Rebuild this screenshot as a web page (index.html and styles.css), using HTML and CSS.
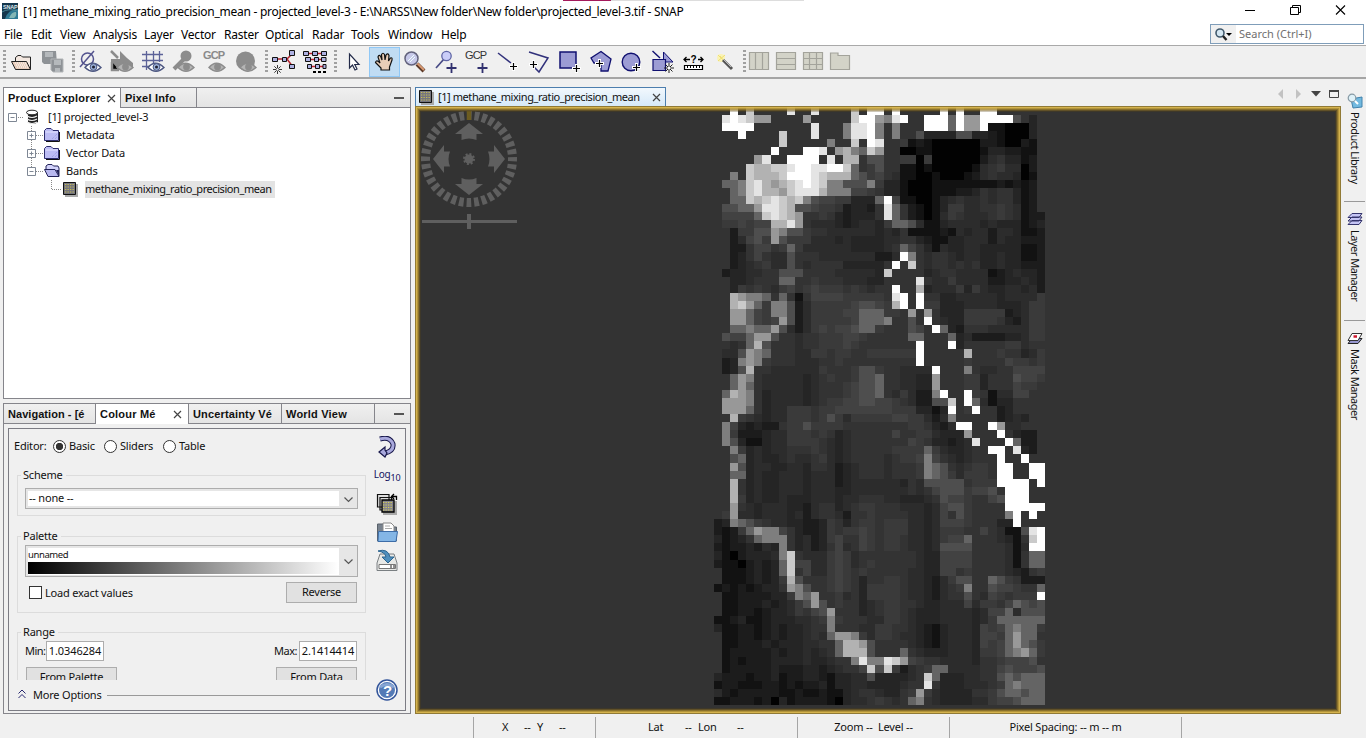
FILE: index.html
```html
<!DOCTYPE html>
<html lang="en">
<head>
<meta charset="utf-8">
<title>SNAP</title>
<link rel="stylesheet" href="styles.css">
</head>
<body>
<svg class="defs" aria-hidden="true">
  <symbol id="eye" viewBox="0 0 18 12"><path d="M1 6.5Q8 -2 17 6.5Q9 14 1 6.5Z" fill="#fff" stroke="currentColor" stroke-width="1.4"/><circle cx="9.5" cy="6" r="3.4" fill="#9db3da" stroke="currentColor"/><circle cx="9.5" cy="6" r="1.5" fill="#223"/></symbol>
  <symbol id="eyeg" viewBox="0 0 18 12"><path d="M1 6.5Q8 -2 17 6.5Q9 14 1 6.5Z" fill="#b4b4b4" stroke="#8c8c8c" stroke-width="1.4"/><circle cx="9.5" cy="6" r="3.4" fill="#8c8c8c"/></symbol>
  <symbol id="plus" viewBox="0 0 9 9"><path d="M4.500 0V9M0 4.500H9" stroke="#fff" stroke-width="3"/><path d="M4.500 1V8M1 4.500H8" stroke="#000" stroke-width="1.200"/></symbol>
  <symbol id="star" viewBox="0 0 10 10"><path d="M5 0V10M0 5H10M1.500 1.500L8.500 8.500M8.500 1.500L1.500 8.500" stroke="#222" stroke-width="1"/><circle cx="5" cy="5" r="1.300" fill="#fff"/></symbol>
  <symbol id="band" viewBox="0 0 15 15"><path d="M2 2H15V15H2Z" fill="#aaa"/><path d="M.5 .5H12.500V12.500H.5Z" fill="#75757e" stroke="#111"/><path d="M2 2.500H12M2 5H12M2 7.500H12M2 10H12" stroke="#c8bd55" stroke-width="1.200" stroke-dasharray="1.300 1.200"/></symbol>
  <symbol id="folder" viewBox="0 0 16 14"><path d="M2 13.500H15.500V4" fill="none" stroke="#111"/><path d="M.5 12.500V2.500L2.500 .5H7L9 2.500H14.500V12.500Z" fill="#bcbcf4" stroke="#2d2d6e"/><path d="M1.500 4H14" stroke="#e4e4ff"/><path d="M8 11L13 6M11 11L13 9" stroke="#9898dc" stroke-dasharray="1 1"/></symbol>
</svg>

<header class="titlebar">
  <svg class="applogo" viewBox="0 0 16 16"><rect width="16" height="16" fill="#15364c"/><path d="M3 16Q6 6 16 6V16Z" fill="#2f7a94"/><path d="M7 15Q10 8 14 9Q15 13 12 15Z" fill="#83b6b5"/><path d="M0 9Q6 5 16 8" stroke="#4b8899" fill="none"/><text x="1" y="6" font-size="5.500" font-weight="bold" fill="#dbe8ec" font-family="Liberation Sans">SNAP</text></svg>
  <span class="caption">[1] methane_mixing_ratio_precision_mean - projected_level-3 - E:\NARSS\New folder\New folder\projected_level-3.tif - SNAP</span>
  <div class="topstrip"><i></i></div>
  <svg class="winbtns" viewBox="0 0 126 20"><path d="M10 10.500H20" stroke="#000"/><path d="M55.500 7.500H63.500V14.500H55.500ZM57.500 7V5.500H65.500V12.500H64" fill="none" stroke="#000"/><path d="M101 5.500L110 14.500M110 5.500L101 14.500" stroke="#000" stroke-width="1.100"/></svg>
</header>

<nav class="menubar">
  <span class="m1">File</span><span class="m2">Edit</span><span class="m3">View</span><span class="m4">Analysis</span><span class="m5">Layer</span><span class="m6">Vector</span><span class="m7">Raster</span><span class="m8">Optical</span><span class="m9">Radar</span><span class="m10">Tools</span><span class="m11">Window</span><span class="m12">Help</span>
  <div class="search"><div class="searchicon"><svg viewBox="0 0 22 16"><circle cx="7" cy="6" r="4" fill="#d5e7f2" stroke="#41596c" stroke-width="1.600"/><path d="M10 9L13.500 13" stroke="#222" stroke-width="2.400"/><path d="M13 6H19L16 9Z"/></svg></div><span>Search (Ctrl+I)</span></div>
</nav>

<div class="toolbar">
  <i class="grip g0"></i>
  <b><svg viewBox="0 0 24 24"><path d="M5.500 19V7.500L8 5.500H11L12.500 7H20.500V19Z" fill="#f4e8e0" stroke="#222"/><path d="M5.500 19.500L1.500 11.500H16.500L20.500 19.500Z" fill="#e8cdbb" stroke="#222"/><path d="M5 13H16M6 15H17M7 17H18" stroke="#fff" stroke-dasharray="1 1"/></svg></b>
  <b><svg viewBox="0 0 24 24"><path d="M1 1H15L16 14H3L1 12Z" fill="#8e9296"/><path d="M4 2H12V7H4Z" fill="#b5b9bc"/><path d="M10 9H22V22H12L10 20Z" fill="#8e9296" stroke="#b3b6b8"/><path d="M13 10H20V15H13ZM14 18H19V22H14Z" fill="#b5b9bc"/></svg></b>
  <i class="grip"></i>
  <b class="blue"><svg viewBox="0 0 24 24"><circle cx="8.500" cy="9" r="6" fill="none" stroke="#53538e" stroke-width="1.500"/><path d="M1 17L15 1" stroke="#53538e" stroke-width="1.500"/><use href="#eye" x="5" y="11" width="18" height="12"/></svg></b>
  <b><svg viewBox="0 0 24 24"><path d="M1 9H10V1L17 8L23 13V17H1Z" fill="#8c8c8c"/><path d="M1 1L8 8M2 12V20H9" stroke="#8c8c8c" stroke-width="2.500"/><use href="#eyeg" x="6" y="11" width="18" height="12"/></svg></b>
  <b class="blue"><svg viewBox="0 0 24 24"><path d="M5.500 1V20M12.500 1V20M18.500 1V12M1 4.500H22M1 10.500H22M1 16.500H9" stroke="#5c6298" stroke-width="1.300"/><use href="#eye" x="6" y="11" width="18" height="12"/></svg></b>
  <b><svg viewBox="0 0 24 24"><circle cx="14" cy="6" r="5.500" fill="#8c8c8c"/><path d="M12 9L2 19" stroke="#8c8c8c" stroke-width="4"/><use href="#eyeg" x="5" y="11" width="18" height="12"/></svg></b>
  <b><svg viewBox="0 0 24 24"><text x="0" y="9" class="gcp grey" textLength="22">GCP</text><use href="#eyeg" x="5" y="11" width="18" height="12"/></svg></b>
  <b><svg viewBox="0 0 24 24"><circle cx="11.500" cy="11" r="9.500" fill="#8c8c8c"/><use href="#eyeg" x="5" y="11" width="18" height="12"/></svg></b>
  <i class="grip"></i>
  <b><svg viewBox="0 0 24 24"><path d="M4 9H15L21 3M15 9L21 17" stroke="#b42430" stroke-width="1.500" fill="none"/><path d="M.5 7.500H5.500V11.500H.5ZM10.500 7.500H14.500V11.500H10.500ZM17.500 .5H22.500V5.500H17.500ZM17.500 14.500H22.500V18.500H17.500Z" fill="#aeb1e2" stroke="#111"/><use href="#star" x="1" y="15" width="9" height="9"/></svg></b>
  <b><svg viewBox="0 0 24 24"><path d="M1 3.500H23M4 9.500H23M4 16.500H22" stroke="#c02030" stroke-width="1.600"/><path d="M.5 1.500H5.500V5.500H.5ZM9.500 1.500H14.500V5.500H9.500ZM18.500 1.500H23.500V5.500H18.500ZM2.500 7.500H7.500V11.500H2.500ZM11.500 7.500H15.500V11.500H11.500ZM18.500 7.500H23V11.500H18.500ZM4.500 14.500H8.500V18.500H4.500ZM12.500 14.500H16.500V18.500H12.500ZM20 14.500H23V18.500H20Z" fill="#aeb1e2" stroke="#111"/><path d="M10 22H13M15 22H18M20 22H23" stroke="#000" stroke-width="2"/></svg></b>
  <i class="grip"></i>
  <b><svg viewBox="0 0 24 24"><path d="M8.500 4V18L11.500 15L14 20L16 19L13.800 14.500H18Z" fill="#fff" stroke="#222a48" stroke-width="1.200"/></svg></b>
  <b class="on"><svg viewBox="0 0 24 24"><path d="M9 20V18L3.500 12.500Q4 10 6.500 11.500L8 13L6 7Q7 4 8.700 6.500L10 10L9.500 4.500Q11 2 12.500 4.500L13 10L14 5Q16 2.500 17 5.500L16.500 11L18.500 8Q20.500 7 20 10L17.500 17V20Z" fill="#e9cdb7" stroke="#111" stroke-width="1.200"/></svg></b>
  <b><svg viewBox="0 0 24 24"><path d="M14 14L21 21" stroke="#5b3827" stroke-width="4"/><path d="M14.500 13.500L21 20" stroke="#d99a72" stroke-width="2"/><circle cx="8.500" cy="8.500" r="6.500" fill="#c7c9e9" stroke="#62627c" stroke-width="1.500"/><path d="M5 11L11 5M7 12L12 7" stroke="#eff"/></svg></b>
  <b><svg viewBox="0 0 24 24"><path d="M10 9L2 18" stroke="#474a85" stroke-width="1.700"/><circle cx="12.500" cy="6" r="4.700" fill="#cacdf8" stroke="#5e64a4" stroke-width="1.300"/><path d="M17.500 13V23M12.500 18H22.500" stroke="#31316f" stroke-width="1.800"/></svg></b>
  <b><svg viewBox="0 0 24 24"><text x="0" y="9" class="gcp" textLength="22">GCP</text><path d="M17.500 13V23M12.500 18H22.500" stroke="#31316f" stroke-width="1.800"/></svg></b>
  <b><svg viewBox="0 0 24 24"><path d="M2 3L15 13" stroke="#31317b" stroke-width="1.500"/><use href="#plus" x="13" y="12" width="9" height="9"/></svg></b>
  <b><svg viewBox="0 0 24 24"><path d="M2 2L21 8L12 22L7 17" stroke="#31317b" stroke-width="1.500" fill="none"/><use href="#plus" x="2" y="10" width="9" height="9"/></svg></b>
  <b><svg viewBox="0 0 24 24"><path d="M2 2H18V18H2Z" fill="#9c9cd4" stroke="#101070" stroke-width="1.500"/><use href="#plus" x="14" y="14" width="9" height="9"/></svg></b>
  <b><svg viewBox="0 0 24 24"><path d="M12 1.500L22 9L19 21H12V13H5L2 8Z" fill="#9c9cd4" stroke="#101070" stroke-width="1.300"/><use href="#plus" x="6" y="9" width="9" height="9"/></svg></b>
  <b><svg viewBox="0 0 24 24"><circle cx="11" cy="12" r="8.800" fill="#9c9cd4" stroke="#101070" stroke-width="1.400"/><use href="#plus" x="12" y="13" width="9" height="9"/></svg></b>
  <b><svg viewBox="0 0 24 24"><path d="M12.500 10V2L22 12H14" fill="#9c9cd4" stroke="#101070"/><path d="M2 9.500H14.500V20.500H2Z" fill="#9c9cd4" stroke="#101070" stroke-width="1.200"/><path d="M1.500 1L9 8" stroke="#101070" stroke-width="1.400"/><use href="#star" x="13" y="13" width="10" height="10"/></svg></b>
  <b><svg viewBox="0 0 24 24"><path d="M2 9.500H8M16 9.500H21M4.500 7L2 9.500L4.500 12M18.500 7L21 9.500L18.500 12" stroke="#000" stroke-width="1.300" fill="none"/><text x="8.500" y="12.500" font-size="10" font-weight="bold" font-family="Liberation Sans">?</text><path d="M2.500 15.500H20.500V19.500H2.500Z" fill="#fff" stroke="#000" stroke-width="1.200"/><path d="M5.500 15V18M8.500 15V18M11.500 15V18M14.500 15V18M17.500 15V18" stroke="#000"/></svg></b>
  <b><svg viewBox="0 0 24 24"><circle cx="8" cy="8" r="4" fill="#faf3b5"/><path d="M7 6L11 11M12 5L5 11M5 5L10 10" stroke="#efdf71"/><path d="M10 10L19 19" stroke="#555" stroke-width="3"/><path d="M10 9L18 17" stroke="#bbb"/></svg></b>
  <i class="grip g4"></i>
  <b class="n"><svg viewBox="0 0 24 24"><path d="M2.500 2.500H21.500V19.500H2.500ZM8.500 3V19M15.500 3V19"/></svg></b>
  <b class="n"><svg viewBox="0 0 24 24"><path d="M2.500 2.500H21.500V19.500H2.500ZM3 8.500H21M3 14.500H21"/></svg></b>
  <b class="n"><svg viewBox="0 0 24 24"><path d="M2.500 2.500H21.500V19.500H2.500ZM3 8.500H21M3 14.500H21M8.500 3V19M15.500 3V19"/></svg></b>
  <b class="n"><svg viewBox="0 0 24 24"><path d="M2.500 19.500V3H10V5.500H21.500V19.500Z"/></svg></b>
</div>

<main>
  <aside class="left">
    <section class="panel explorer">
      <div class="tabs">
        <div class="tab act t1"><span>Product Explorer</span><svg viewBox="0 0 9 9"><path d="M1 1L8 8M8 1L1 8"/></svg></div>
        <div class="tab t2"><span>Pixel Info</span></div>
        <div class="tabfill"><i></i></div>
      </div>
      <div class="tree">
        <div class="row r0"><svg class="lines" viewBox="0 0 20 18"><path d="M14 9.500H20" class="dots"/><path d="M4.500 5.500H12.500V13.500H4.500ZM6.500 9.500H10.500" class="box"/></svg><svg class="ico" viewBox="0 0 16 16"><path d="M3 3V13Q8 17 13 13V3" fill="#222"/><ellipse cx="7" cy="3.500" rx="5.500" ry="2.300" fill="#fff" stroke="#222"/><path d="M2 7Q7 10 12 7M2 10Q7 13 12 10M2 13Q7 16 12 13" stroke="#eee" stroke-width="1.200" fill="none"/></svg><span>[1] projected_level-3</span></div>
        <div class="row r1"><svg class="lines" viewBox="0 0 40 18"><path d="M27.500 0V18M32 9.500H39" class="dots"/><path d="M23.500 5.500H31.500V13.500H23.500ZM25.500 9.500H29.500M27.500 7.500V11.500" class="box"/></svg><svg class="ico"><use href="#folder"/></svg><span>Metadata</span></div>
        <div class="row r1"><svg class="lines" viewBox="0 0 40 18"><path d="M27.500 0V18M32 9.500H39" class="dots"/><path d="M23.500 5.500H31.500V13.500H23.500ZM25.500 9.500H29.500M27.500 7.500V11.500" class="box"/></svg><svg class="ico"><use href="#folder"/></svg><span>Vector Data</span></div>
        <div class="row r1"><svg class="lines" viewBox="0 0 40 18"><path d="M27.500 0V5M32 9.500H39" class="dots"/><path d="M23.500 5.500H31.500V13.500H23.500ZM25.500 9.500H29.500" class="box"/></svg><svg class="ico" viewBox="0 0 16 14"><path d="M2 6V2L4 .5H8L9.500 2H14L15 4V12H4Z" fill="#d3d3fb" stroke="#222258"/><path d="M4 12.500L.5 5.500H11L15 12.500Z" fill="#b8b8ef" stroke="#222258"/><path d="M12 6H15V12Z" fill="#222258"/></svg><span>Bands</span></div>
        <div class="row r2"><svg class="lines" viewBox="0 0 60 18"><path d="M47.500 0V9.500H58" class="dots"/></svg><svg class="ico"><use href="#band"/></svg><span class="sel">methane_mixing_ratio_precision_mean</span></div>
      </div>
    </section>

    <section class="panel colour">
      <div class="tabs">
        <div class="tab u1"><span>Navigation - [é</span></div>
        <div class="tab act u2"><span>Colour Mé</span><svg viewBox="0 0 9 9"><path d="M1 1L8 8M8 1L1 8"/></svg></div>
        <div class="tab u3"><span>Uncertainty Vé</span></div>
        <div class="tab u4"><span>World View</span></div>
        <div class="tabfill"><i></i></div>
      </div>
      <div class="inner">
        <div class="formcol">
          <div class="scroll">
            <div class="editor"><span class="e1">Editor:</span><i class="radio on"></i><span class="e2">Basic</span><i class="radio"></i><span class="e3">Sliders</span><i class="radio"></i><span>Table</span></div>
            <fieldset class="scheme"><legend>Scheme</legend>
              <div class="combo"><div class="val"><span>-- none --</span></div><svg viewBox="0 0 9 6"><path d="M.5 .5L4.500 4.500L8.500 .5"/></svg></div>
            </fieldset>
            <fieldset class="palette"><legend>Palette</legend>
              <div class="combo tall"><div class="val"><span>unnamed</span><i class="ramp"></i></div><svg viewBox="0 0 9 6"><path d="M.5 .5L4.500 4.500L8.500 .5"/></svg></div>
              <div class="line"><i class="check"></i><span>Load exact values</span><div class="btn">Reverse</div></div>
            </fieldset>
            <fieldset class="range"><legend>Range</legend>
              <div class="minmax"><span>Min:</span><div class="num">1.0346284</div><span class="max">Max:</span><div class="num">2.1414414</div></div>
              <div class="fromrow"><div class="btn f1">From Palette</div><div class="btn f2">From Data</div></div>
            </fieldset>
          </div>
          <div class="more"><svg viewBox="0 0 8 10"><path d="M.5 4.500L4 1L7.500 4.500M.5 9L4 5.500L7.500 9"/></svg><span>More Options</span><i></i></div>
        </div>
        <div class="iconcol">
          <svg viewBox="0 0 22 22"><path d="M4 3Q14 0 17 8Q18 15 9 17" fill="none" stroke="#17174a" stroke-width="5"/><path d="M4 3Q14 0 17 8Q18 15 9 17" fill="none" stroke="#a9a9dd" stroke-width="3"/><path d="M3 16L9 11V14L11 17L9 21Z" fill="#a9a9dd" stroke="#17174a" stroke-width="1.200"/></svg>
          <div class="log">Log<sub>10</sub></div>
          <svg viewBox="0 0 22 22"><path d="M1.500 1.500H13V14H1.500ZM4 4.500H15.500V17H4Z" fill="#ddd" stroke="#111" stroke-width="1.200"/><path d="M7 8H21V22H7Z" fill="#aaa"/><path d="M6 7H18V19H6Z" fill="#85858e" stroke="#000" stroke-width="1.300"/><path d="M7 9.500H17M7 12H17M7 14.500H17M7 17H17" stroke="#d8ce55" stroke-width="1.200" stroke-dasharray="1.300 1.200"/><path d="M16 3.500H20.500V7M18 1L15.500 3.500L18 6" fill="none" stroke="#000" stroke-width="1.300"/></svg>
          <svg viewBox="0 0 22 22"><path d="M1.500 20V3H8L9 6H20.500V20Z" fill="#78828e" stroke="#59616a"/><path d="M7 12V2H15L18 5V12" fill="#fff" stroke="#888"/><path d="M9 5H14M9 7.500H16" stroke="#aaa"/><path d="M2.500 10.500H21.500L20 20.500H2Z" fill="#84b6e6" stroke="#3d6da8"/></svg>
          <svg viewBox="0 0 22 22"><path d="M1 14L4 5H18L21 14V21.500H1Z" fill="#e8e9e7" stroke="#7a7f82"/><path d="M3 15.500H19.500V19.500H3Z" fill="#fff" stroke="#777"/><path d="M15 16V19M18 16V19" stroke="#222"/><path d="M2 2Q12 -1 14 8H18L12 14L6 8H10Q9 3 2 2Z" fill="#4f8fbd" stroke="#2b6490"/></svg>
          <svg class="help" viewBox="0 0 22 22"><circle cx="11" cy="11" r="10" fill="#fff" stroke="#32549a" stroke-width="1.500"/><circle cx="11" cy="11" r="8" fill="#537ab6"/><path d="M4 8Q11 3 18 8" stroke="#86a5d3" fill="none" stroke-width="3"/><text x="7" y="16.500" font-size="15" font-weight="bold" fill="#fff" font-family="Liberation Sans">?</text></svg>
        </div>
      </div>
    </section>
  </aside>

  <section class="view">
    <div class="viewtabs">
      <div class="vtab"><svg class="ico"><use href="#band"/></svg><span>[1] methane_mixing_ratio_precision_mean</span><svg class="x" viewBox="0 0 9 9"><path d="M1 1L8 8M8 1L1 8"/></svg></div>
      <svg class="vctl" viewBox="0 0 64 12"><path d="M6 1V11L1 6Z" fill="#c2c2c2"/><path d="M19 1V11L24 6Z" fill="#c2c2c2"/><path d="M34 3H44L39 8.500Z" fill="#444"/><path d="M52.500 3H61.500V9.500H52.500Z" fill="none" stroke="#444"/><path d="M52 3H62" stroke="#444" stroke-width="2"/></svg>
    </div>
    <div class="scene">
      <canvas id="raster" width="41" height="74"></canvas>
      <svg class="compass" viewBox="0 0 100 120">
        <circle cx="50" cy="50" r="43.500" fill="none" stroke="#5f5f5f" stroke-width="9" stroke-dasharray="4.700 2.892" stroke-dashoffset="2.350"/>
        <path d="M50 2V11" stroke="#6c5c20" stroke-width="4.500"/>
        <g fill="#5f5f5f"><path id="ar" d="M50 14L64 25H57.500V31Q50 28 42.500 31V25H36Z"/><use href="#ar" transform="rotate(90 50 50)"/><use href="#ar" transform="rotate(180 50 50)"/><use href="#ar" transform="rotate(270 50 50)"/><circle cx="50" cy="50" r="4.500"/><path d="M3 111H98V114H3Z"/><path d="M48 105H52V120H48Z"/></g>
        <circle cx="50" cy="50" r="5" fill="none" stroke="#5f5f5f" stroke-width="2" stroke-dasharray="2 1.900"/>
      </svg>
      <div class="frame"></div>
    </div>
  </section>

  <aside class="dock">
    <div class="d1"><svg viewBox="0 0 16 16"><path d="M4 6L15 4V14L6 15Z" fill="#72b9df" stroke="#4182ac"/><circle cx="5" cy="5" r="3.800" fill="#dff1f8" stroke="#8699a4" stroke-width="1.200"/><path d="M8 8L11 11" stroke="#fff" stroke-width="2"/></svg><span>Product Library</span></div>
    <div class="d2"><svg viewBox="0 0 16 16"><path d="M1 13.500L5 9.500H15L12 13.500ZM1 10L5 6H15L12 10ZM1 6.500L5 2.500H15L12 6.500Z" fill="#c4c4f4" stroke="#34346c"/></svg><span>Layer Manager</span></div>
    <div class="d3"><svg viewBox="0 0 16 16"><path d="M1 13.500L5 8.500H15L11 13.500Z" fill="#9696cf" stroke="#222"/><path d="M1 10.500L5 3.500H15L11 10.500Z" fill="#fff" stroke="#333"/><path d="M6.500 6.500H10" stroke="#d01830" stroke-width="2.500"/></svg><span>Mask Manager</span></div>
  </aside>
</main>

<footer>
  <div class="s0"></div>
  <div class="s1"><span>X</span><span class="a">--</span><span class="b">Y</span><span class="c">--</span></div>
  <div class="s2"><span>Lat</span><span class="a">--</span><span class="b">Lon</span><span class="c">--</span></div>
  <div class="s3">Zoom --&nbsp; Level --</div>
  <div class="s4">Pixel Spacing: -- m -- m</div>
  <div class="s5"></div>
</footer>
<script src="raster.js"></script>
</body>
</html>
```
FILE: styles.css
```css
*{box-sizing:border-box}
body{margin:0;width:1366px;height:738px;overflow:hidden;background:#f0f0f0;color:#111;font:11px/14px "Noto Sans","Open Sans",sans-serif;display:flex;flex-direction:column;white-space:nowrap;letter-spacing:-.2px}
svg{display:block;flex:none}
.defs{position:absolute;width:0;height:0}
i{display:block;flex:none}
.titlebar{height:23px;background:#fff;display:flex;align-items:flex-start;position:relative}
.applogo{width:16px;height:16px;margin:3px 5px 0 2px}
.caption{font-size:12px;line-height:24px;letter-spacing:-.265px;flex:1;color:#000}
.topstrip{position:absolute;left:563px;top:0;width:241px;height:1px;background:#ddd}
.topstrip i{width:48px;height:1px;background:#a3195b}
.winbtns{width:126px;height:20px;margin-right:5px}
.menubar{height:23px;background:#fff;display:flex;align-items:center;font-size:12px;letter-spacing:-.2px;border-bottom:1px solid #a9a9a9;padding:1px 0 0 4px;color:#000}
.menubar>span{padding-top:1px}
.m1{width:27px}.m2{width:29px}.m3{width:33px}.m4{width:51px}.m5{width:37px}.m6{width:43px}.m7{width:41px}.m8{width:47px}.m9{width:39px}.m10{width:37px}.m11{width:53px}
.search{margin-left:auto;width:154px;height:20px;margin-right:2px;border:1px solid #7f9db9;display:flex;align-items:center;color:#707070;font-size:11px;letter-spacing:0}
.searchicon{width:25px;height:18px;background:#f0f0f0;padding:2px 0 0 2px;margin-right:3px}
.searchicon svg{width:22px;height:16px}
.toolbar{height:34px;border-bottom:2px solid #a5a5a5;display:flex;align-items:center;padding:1px 0 0 2.5px}
.grip{width:3px;height:24px;margin:0 1px 0 3px;background:repeating-linear-gradient(#a0a0a0 0 2px,transparent 2px 4px)}
.grip.g0{margin:0 1px 0 0}
.grip.g4{margin:0 0 0 2px}
.toolbar b{width:31px;height:30px;display:flex;align-items:center;justify-content:center;color:#4c5680}
.toolbar b svg{width:24px;height:24px}
.toolbar b.on{background:#c0dcf3;border:1px solid #90c8f6}
.toolbar b.n{width:27px}
.n path{fill:#d3d3c8;stroke:#a3a39b;stroke-width:1.2}
.gcp{font:11px "Liberation Sans",sans-serif;fill:#333}
.gcp.grey{fill:#8a8a8a;font-weight:bold}
main{height:635px;display:flex}
.left{width:415px;padding:8px 4px 0 3px;display:flex;flex-direction:column;gap:4px}
.panel{border:1px solid #85858b;width:408px}
.explorer{height:312px;background:#fff}
.colour{height:311px;display:flex;flex-direction:column}
.tabs{display:flex;height:20px;border-bottom:1px solid #85858b;background:linear-gradient(#f0f0f0,#e4e4e4)}
.tab{border-right:1px solid #85858b;padding:0 4px;font:bold 11px/20px "Liberation Sans",Arial,sans-serif;display:flex;align-items:center;justify-content:space-between;letter-spacing:.2px}
.tab.act{background:#fff;height:20px}
.tab svg,.x{width:9px;height:9px;fill:none;stroke:#444;stroke-width:1.2}
.t1{width:117px}.t2{width:76px}
.tabfill{flex:1;display:flex;align-items:center;justify-content:flex-end;padding-right:6px}
.tabfill i{width:10px;height:2px;background:#555}
.u1{width:92px;letter-spacing:.05px}.u2{width:93px}.u3{width:93px;letter-spacing:.15px}.u4{width:93px}
.u2 svg{margin-right:2px}
.row{height:18px;display:flex;align-items:center}
.lines{width:40px;height:18px}
.r0 .lines{width:20px}
.r2 .lines{width:60px}
.lines path{fill:none}
.lines .dots{stroke:#888;stroke-dasharray:1 1}
.lines .box{stroke:#7e8794;fill:#fff}
.row .ico{width:16px;height:14px}
.row.r2 .ico{width:15px;height:15px;margin-left:-1px}
.r0 .ico{height:16px;margin-left:1px}
.row span{margin-left:6px;letter-spacing:-.1px}
.row.r0 span{margin-left:7px;letter-spacing:-.15px}
.row .sel{background:#e3e3e3;line-height:16px;height:17px;margin-left:7px;padding:0 3px 0 0;letter-spacing:-.43px}
.inner{margin:4px 4px 4px 4px;flex:1;border:1px solid #7c7c84;display:flex}
.formcol{width:362px;padding-left:5px}
.scroll{height:251px;overflow:hidden;padding-left:3px}
.editor{height:39px;display:flex;align-items:center;margin-left:-3px;padding-bottom:5px}
.e1{width:39px}.e2{width:35px}.e3{width:43px}
.radio{width:13px;height:13px;border:1px solid #333;border-radius:50%;background:#fff;margin-right:3px}
.radio.on{background:radial-gradient(circle,#333 0 3.4px,#fff 4px)}
fieldset{margin:0;padding:0 7px;border:1px solid #dcdcdc;width:349px;min-width:0}
legend{padding:0 3px 0 2px;margin-left:-4px;height:14px;line-height:14px}
.scheme{height:48px}
.scheme .combo{margin-top:6px}
.palette{height:84px;margin-top:13px}
.range{height:90px;margin-top:12px}
.combo{width:333px;height:21px;border:1px solid #adadad;background:#e6e6e6;display:flex;align-items:center;padding-left:2px}
.val{width:311px;height:15px;background:#fff;line-height:14px;padding-left:1px}
.val span{display:block}
.combo svg{width:9px;height:6px;margin:2px 0 0 5px;fill:none;stroke:#555;stroke-width:1.2}
.combo.tall{height:32px;margin-top:2px}
.tall .val{height:27px;font-size:9.5px;padding:0;line-height:14px;letter-spacing:-.4px}
.ramp{height:12px;background:linear-gradient(90deg,#000,#fff)}
.line{display:flex;align-items:center;margin-top:5px;padding-left:4px}
.check{width:13px;height:13px;border:1px solid #333;background:#fff;margin-right:3px}
.btn{height:21px;border:1px solid #adadad;background:#e1e1e1;text-align:center;line-height:18px}
.line .btn{width:71px;margin-left:auto;margin-right:1px}
.minmax{display:flex;align-items:center;height:20px;margin-top:2px}
.minmax span{width:21px;letter-spacing:-.5px}
.minmax .max{margin-left:auto;width:25px}
.num{width:58px;height:20px;border:1px solid #adadad;background:#fff;line-height:18px;text-align:center;letter-spacing:-.1px}
.minmax .num:last-child{margin-right:1px}
.fromrow{display:flex;justify-content:space-between;margin-top:6px;padding:0 1px 0 1px}
.f1{width:91px}.f2{width:81px}
.more{display:flex;align-items:center;height:30px;padding-left:4px}
.more svg{width:8px;height:10px;fill:none;stroke:#27276e;margin:-3px 7px 0 0}
.more i{height:1px;background:#999;flex:1;margin:0 1px 0 5px}
.iconcol{width:32px;display:flex;flex-direction:column;align-items:center;padding-top:7px}
.iconcol svg{width:22px;height:22px;margin-bottom:6px}
.log{height:22px;margin-bottom:7px;color:#14145f;line-height:20px;font-size:10px}
.log sub{font-size:9px;line-height:0}
.iconcol .help{margin:102px 0 0}
.view{width:926px;display:flex;flex-direction:column;padding-top:8px}
.viewtabs{height:20px;display:flex;justify-content:space-between}
.vtab{width:251px;border:1px solid #4c7eae;border-bottom:0;background:linear-gradient(#f2f8fd,#d4e8f8);display:flex;align-items:center;padding-left:3px}
.vtab .ico{width:15px;height:15px}
.vtab span{margin:-1px 0 0 4px;flex:1;letter-spacing:-.42px}
.vtab .x{margin-right:4px}
.vctl{width:64px;height:12px;margin:1px 0 0}
.scene{height:607px;background:#333;position:relative;padding-left:299px}
#raster{display:block;width:331px;height:598px;image-rendering:pixelated}
.compass{position:absolute;left:4px;top:2px;width:100px;height:120px}
.frame{position:absolute;inset:-1px 0 0 0;box-shadow:inset 0 0 0 1px #917a35,inset 0 0 0 2px rgba(222,187,84,.8),inset 0 0 0 3px rgba(203,170,70,.6),inset 0 0 0 4px rgba(180,145,50,.5),inset 0 0 0 5px rgba(150,120,40,.4),inset 0 0 0 6px rgba(90,70,20,.3)}
.dock{width:25px;padding:14px 1px 0 3px}
.dock div{display:flex;flex-direction:column;align-items:center;height:109px;border-bottom:1px solid #999}
.dock .d2,.dock .d3{height:119px;padding-top:9px}
.dock .d3{border:0}
.dock svg{width:16px;height:16px}
.dock span{writing-mode:vertical-rl;margin-top:3px;line-height:14px;letter-spacing:-.5px}
footer{height:24px;display:flex;align-items:center;letter-spacing:-.2px;padding-top:3px}
footer>div{height:21px;line-height:19px;border-right:1px solid #a5a5a5;display:flex;justify-content:center}
footer .s0{width:474px}.s1{width:122px}.s2{width:202px}.s3{width:152px}.s4{width:232px}
footer .s5{border:0}
footer .s1,footer .s2{justify-content:flex-start;padding-left:28px}
.s1 span{width:22px}.s1 .a{width:13px}
footer .s2{padding-left:52px}
.s2 span{width:37px}.s2 .a{width:13px}.s2 .b{width:39px}
```
FILE: raster.js
```js
// Grey level of each raster cell, one hex digit per cell, 41 columns per row.
const LEVELS = [2, 18, 28, 37, 44, 51, 58, 66, 78, 100, 126, 152, 178, 202, 228, 255];
const ROWS = `
55f5d5555e 55e5555d5f f5f55555f5 f55ff55555 5
5efedbb555 5b55555dff baef55fff9 fbbffff853 5
5ffff55555 55e555aeef a5a555fff9 fbbf110003 5
555f5555d5 55e555aeef a5a5583333 8833210003 5
55555555d5 5555a55d5f e556121000 0002210021 5
5555555f55 5ffe5bca9d b550011000 0001332211 5
55555be55f fff5e5cc58 8556606000 0002453312 5
5555dccdde ffeeffd956 8551101000 0014564402 5
55a5dcccdf ffedccc986 7541100100 0124544301 5
599adecbcd efedaa888a 6331000111 1111121212 5
559adeccbd eeecaaa776 5331000111 2235455312 5
5599dcdedc da87766333 9f71100134 5445455312 5
58899beedc 8876652332 5e95210136 6445565412 5
577779dedc b556532333 5e95210146 5444565412 2
5667677cce b544432344 3699841134 4443433312 3
5526688ba8 8655444444 3435111121 4344244311 2
5524786b86 6644434333 3445532113 3444243322 2
5522577569 6444444333 3459753143 3443333311 2
5523575448 5554444444 224fa54554 3443343311 2
5523456448 5455553333 35f5d54554 5453343322 2
5233445588 8555544444 3d55553455 4444123433 2
5533455599 5565554443 35555e5446 4444223343 2
5536565467 5676665654 55f55c3444 6364334434 2
55cbaa9595 1577776666 65ef5f5533 4444434444 6
55cdb96aa8 2466666788 76cf5f6633 3444433346 6
55bb976aa8 2466667799 9665b5b533 3666662346 6
55bb9767b8 2466666799 9a5585f543 3666653246 6
5599a99b84 2467677899 6555875f93 2555444446 6
58779bb855 4556667765 5555995559 3422223346 6
55459c8555 4556667655 55555f555f 3555556645 5
5448ba9555 4466566556 66666f5555 5c55565534 6
523aba6555 4445565555 55555f5555 5655557665 6
5238c55444 4446555688 6554444f55 5a54455777 7
559ba54444 4345655688 9554433b55 5663555877 6
559b954444 4345556788 9554433b55 5663555766 5
59cba53444 4345556788 9546422af5 5f65144775 5
5bbba53444 4345667788 776542288d 5f94133555 5
5bbb953446 6656677777 776663313f 56f5523555 5
55c6543446 6656864666 667766424a 5555523435 5
5a73232256 6866665555 5555665324 ff55fb4455 5
5a62223446 6656534555 5575566433 3b555f5322 5
5a83113446 6665434555 5555765332 34e555f922 5
55a6343445 5565434555 5566669643 3455ff5e32 5
5589343345 4456434555 545667a754 34555f55f5 5
55b8344334 4355423455 545556a985 45665ff55f f
5599343344 4344423455 545556a986 46665ff55f f
55c5343344 4344423444 4443548888 85666ffff5 f
55c5343344 4344433444 4444545788 867785fff5 5
55c6343343 3344434455 5443334587 765578fff5 5
55b5434443 3245534566 5554443478 865555ffff f
56b4434443 4245542556 5555443475 865555af5f 5
23a9865443 3223653566 5666443477 7655533f55 5
21269baa75 3223656676 5666443466 655754118e f
312359aaa5 3423675576 5665443467 795554315d f
21223243a5 3423574576 5665443488 885555414f f
31023334ad 5444676455 5555543377 7755554159 9
211023239d 7744676456 5555543377 7755554159 9
511123239d 5744676565 5555443377 5655554325 6
511123236c 8555676535 5665443246 8855986522 2
121212335b a855676536 6665443245 6a55877655 9
5112222336 a9b5564536 6665443245 5854765666 f
5112223234 68b8565534 5665543344 4746657987 8
5112212334 6578b55534 5665433344 4434779488 8
1123112333 4456a65554 4665433344 4434699999 9
3112212323 3455a55544 6655432134 4437679a99 6
5112212323 34549bba64 6654432134 4437769b99 5
5112223233 344559ccb8 5555432134 4437679b98 6
5122222323 343459ccc8 5559543334 4436679ab9 6
5121222333 3433455aea aedb765544 4435567778 5
5122222322 233234557d 8d62456994 4445578777 8
3222122312 2332133448 333345d933 3445589899 9
1221112212 1223133443 333455e533 3444569a99 9
4212222211 2112113455 43356b6433 3355689989 9
1122212031 2222103445 65459a5433 3344677899 9
`.trim().split("\n");

const ctx = document.getElementById("raster").getContext("2d");
ROWS.forEach((row, y) => {
  [...row.replace(/ /g, "")].forEach((digit, x) => {
    const v = LEVELS[parseInt(digit, 16)];
    ctx.fillStyle = `rgb(${v},${v},${v})`;
    ctx.fillRect(x, y, 1, 1);
  });
});
```
